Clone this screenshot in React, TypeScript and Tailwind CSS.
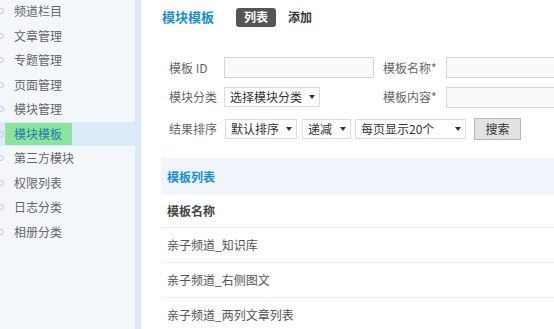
import React from "react"

const navItems = ["频道栏目", "文章管理", "专题管理", "页面管理", "模块管理", "模块模板", "第三方模块", "权限列表", "日志分类", "相册分类"]
const rows = ["亲子频道_知识库", "亲子频道_右侧图文", "亲子频道_两列文章列表"]

const font = { fontFamily: '"Noto Sans CJK SC", "Noto Sans", sans-serif' }

function Caret() {
  return <span className="ml-auto mr-[4px] w-0 h-0 border-l-[3px] border-r-[3px] border-t-[4px] border-l-transparent border-r-transparent border-t-[#333]" />
}

function Select({ label, className = "" }: { label: string; className?: string }) {
  return (
    <div className={`shrink-0 flex items-center h-[20px] border border-[#dcdcdc] bg-white pl-[5px] text-[12px] text-[#333] ${className}`}>
      <span>{label}</span>
      <Caret />
    </div>
  )
}

export default function App() {
  return (
    <div className="flex w-[554px] h-[329px] overflow-hidden bg-white text-[12px]" style={font}>
      {/* Sidebar */}
      <div className="w-[135px] shrink-0 bg-[#f3f7fb]">
        <div className="-mt-[1px]">
          {navItems.map((item) => {
            const active = item === "模块模板"
            return (
              <div
                key={item}
                className={`relative flex items-center h-[24.5px] ${active ? "bg-[#dcebf9]" : ""}`}
              >
                <span className="absolute left-[-2px] w-[6px] h-[6px] rounded-full border border-[#c8ccd0]" />
                {active ? (
                  <span className="ml-[5px] h-[22px] w-[67px] flex items-center pl-[9px] bg-[#8be39c] text-[#1f7fb0]">
                    {item}
                  </span>
                ) : (
                  <span className="ml-[14px] text-[#666]">{item}</span>
                )}
              </div>
            )
          })}
        </div>
      </div>
      <div className="w-[6px] shrink-0 bg-[#dbe8f6]" />

      {/* Main */}
      <div className="flex-1 min-w-0 pl-[20px]">
        <div className="flex items-center h-[34px] pl-[1px]">
          <span className="text-[13px] font-bold text-[#1a8fd0]">模块模板</span>
          <span className="ml-[22px] px-[8px] h-[19px] flex items-center rounded-[3px] bg-[#555] text-white font-bold">列表</span>
          <span className="ml-[12px] text-[#333] font-bold">添加</span>
        </div>

        <div className="pl-[8px] pt-[23px] flex flex-col gap-[9px] text-[#666]">
          <div className="flex items-center h-[21px]">
            <span className="shrink-0 w-[55px]">模板 ID</span>
            <div className="shrink-0 w-[150px] h-[21px] border border-[#d4d4d4] bg-[#fafafa]" />
            <span className="shrink-0 ml-[9px] w-[63px]">模板名称*</span>
            <div className="shrink-0 w-[120px] h-[21px] border border-[#d4d4d4] bg-[#fafafa]" />
          </div>
          <div className="flex items-center h-[20px]">
            <span className="shrink-0 w-[55px]">模块分类</span>
            <Select label="选择模块分类" className="w-[96px]" />
            <span className="shrink-0 ml-[63px] w-[63px]">模板内容*</span>
            <div className="shrink-0 w-[120px] h-[21px] border border-[#d4d4d4] bg-[#fafafa]" />
          </div>
          <div className="flex items-center h-[22px] mt-[2px]">
            <span className="shrink-0 w-[56px]">结果排序</span>
            <Select label="默认排序" className="w-[72px]" />
            <Select label="递减" className="w-[49px] ml-[5px]" />
            <Select label="每页显示20个" className="w-[111px] ml-[4px]" />
            <button className="shrink-0 ml-[8px] w-[47px] h-[22px] bg-[#e2e2e2] border border-[#b8b8b8] text-[#333]">搜索</button>
          </div>
        </div>

        <div className="mt-[18px]">
          <div className="h-[37px] flex items-center pl-[6px] bg-[#f0f5fb] text-[#1a8fd0] font-bold">模板列表</div>
          <div className="h-[33px] flex items-center pl-[6px] border-b border-[#eeeeee] text-[#444] font-bold">模板名称</div>
          {rows.map((r) => (
            <div key={r} className="h-[35px] flex items-center pl-[6px] border-b border-[#eeeeee] text-[#555]">
              {r}
            </div>
          ))}
        </div>
      </div>
    </div>
  )
}
